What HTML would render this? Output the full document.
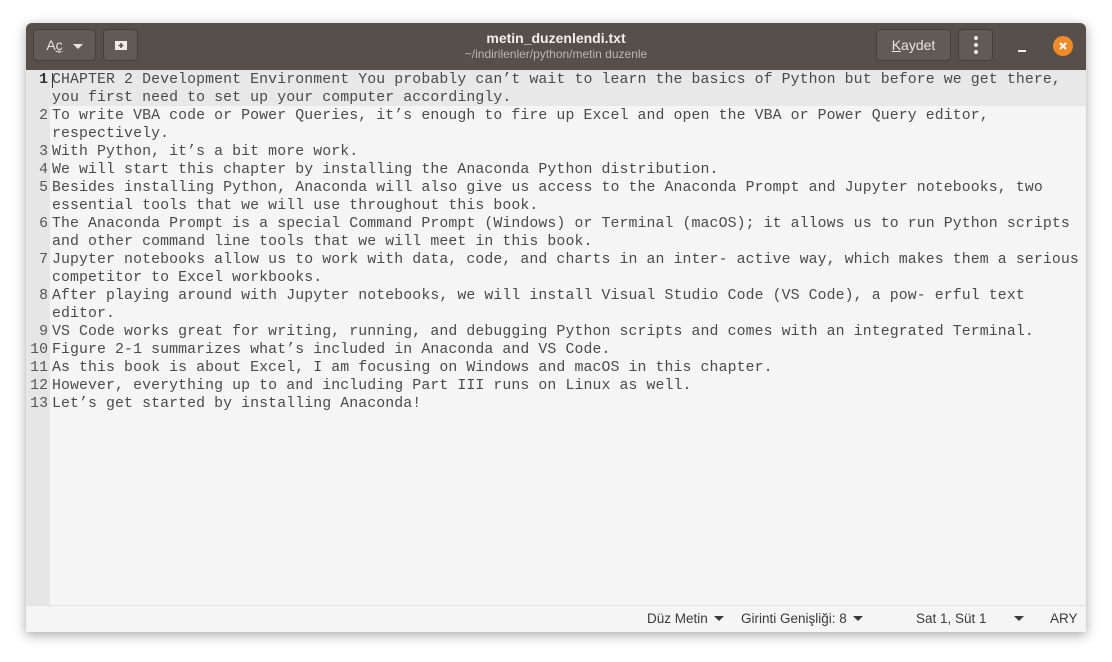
<!DOCTYPE html>
<html><head><meta charset="utf-8"><style>
body{margin:0;width:1112px;height:662px;background:#fff;position:relative;overflow:hidden;font-family:"Liberation Sans","DejaVu Sans",sans-serif}
.win{position:absolute;left:26px;top:23px;width:1060px;height:609px;box-shadow:0 3px 12px rgba(0,0,0,.35);border-radius:6px 6px 0 0;overflow:hidden;background:#f5f5f5}
.hdr{position:absolute;left:0;top:0;width:1060px;height:47px;background:#574f4a;}
.btn{position:absolute;top:6px;height:32px;border-radius:4px;background:#625a54;border:1px solid #463f3b;box-sizing:border-box;color:#e8e4e0;font-size:14px;line-height:30px;text-align:center}
.title{position:absolute;left:0;width:1060px;text-align:center;color:#f2efec}
.gut{position:absolute;left:0;top:47px;width:24px;height:535px;background:#e6e6e6}
.cur{position:absolute;left:24px;top:47px;width:1036px;height:36px;background:#e8e8e8}
.ed{position:absolute;left:0;top:48px;font-family:"Liberation Mono",monospace;font-size:14.85px;letter-spacing:0.1px;line-height:18px;color:#4a4a4a;white-space:pre}
.ln{position:absolute;left:0;width:22px;text-align:right;color:#555;letter-spacing:0}
.tx{position:absolute;left:26px}
.sb{position:absolute;left:0;top:582px;width:1060px;height:27px;background:#f5f5f5;border-top:1px solid #e0e0e0;font-size:13.5px;color:#3a3a3a}
.sb span{position:absolute;top:5px}
.tri{display:inline-block;width:0;height:0;border-left:5px solid transparent;border-right:5px solid transparent;border-top:5px solid #3a3a3a;vertical-align:middle;margin-left:6px}
</style></head><body>
<div class="win">
<div class="hdr">
 <div class="btn" style="left:7px;width:63px">A<span style="text-decoration:underline">ç</span><span class="tri" style="border-top-color:#e8e4e0;margin-left:10px"></span></div>
 <div class="btn" style="left:77px;width:35px"><svg width="16" height="14" viewBox="0 0 16 14" style="margin-top:8px"><path d="M2 3h12v9H2z" fill="#f0ece8"/><path d="M8 5v5M5.5 7.5h5" stroke="#574f4a" stroke-width="1.6"/></svg></div>
 <div class="title" style="top:7px;font-size:14px;font-weight:bold">metin_duzenlendi.txt</div>
 <div class="title" style="top:24px;font-size:12px;color:#bdb6b0">~/indirilenler/python/metin duzenle</div>
 <div class="btn" style="left:850px;width:75px"><span style="text-decoration:underline">K</span>aydet</div>
 <div class="btn" style="left:932px;width:35px"><svg width="6" height="20" style="margin-top:5px"><circle cx="3" cy="3" r="2" fill="#eee"/><circle cx="3" cy="10" r="2" fill="#eee"/><circle cx="3" cy="17" r="2" fill="#eee"/></svg></div>
 <div style="position:absolute;left:992px;top:27px;width:8px;height:2px;background:#eee"></div>
 <div style="position:absolute;left:1027px;top:13px;width:20px;height:20px;border-radius:50%;background:#f08b2a"><svg width="20" height="20"><path d="M7 7l6 6M13 7l-6 6" stroke="#fff" stroke-width="2"/></svg></div>
</div>
<div class="gut"></div>
<div class="cur"></div>
<div style="position:absolute;left:26px;top:50px;width:1px;height:15px;background:#333"></div>
<div class="ed">
<div class="ln" style="top:0;font-weight:bold;color:#333">1</div><div class="tx" style="top:0">CHAPTER 2 Development Environment You probably can’t wait to learn the basics of Python but before we get there,
you first need to set up your computer accordingly.</div>
<div class="ln" style="top:36px">2</div><div class="tx" style="top:36px">To write VBA code or Power Queries, it’s enough to fire up Excel and open the VBA or Power Query editor,
respectively.</div>
<div class="ln" style="top:72px">3</div><div class="tx" style="top:72px">With Python, it’s a bit more work.</div>
<div class="ln" style="top:90px">4</div><div class="tx" style="top:90px">We will start this chapter by installing the Anaconda Python distribution.</div>
<div class="ln" style="top:108px">5</div><div class="tx" style="top:108px">Besides installing Python, Anaconda will also give us access to the Anaconda Prompt and Jupyter notebooks, two
essential tools that we will use throughout this book.</div>
<div class="ln" style="top:144px">6</div><div class="tx" style="top:144px">The Anaconda Prompt is a special Command Prompt (Windows) or Terminal (macOS); it allows us to run Python scripts
and other command line tools that we will meet in this book.</div>
<div class="ln" style="top:180px">7</div><div class="tx" style="top:180px">Jupyter notebooks allow us to work with data, code, and charts in an inter- active way, which makes them a serious
competitor to Excel workbooks.</div>
<div class="ln" style="top:216px">8</div><div class="tx" style="top:216px">After playing around with Jupyter notebooks, we will install Visual Studio Code (VS Code), a pow- erful text
editor.</div>
<div class="ln" style="top:252px">9</div><div class="tx" style="top:252px">VS Code works great for writing, running, and debugging Python scripts and comes with an integrated Terminal.</div>
<div class="ln" style="top:270px">10</div><div class="tx" style="top:270px">Figure 2-1 summarizes what’s included in Anaconda and VS Code.</div>
<div class="ln" style="top:288px">11</div><div class="tx" style="top:288px">As this book is about Excel, I am focusing on Windows and macOS in this chapter.</div>
<div class="ln" style="top:306px">12</div><div class="tx" style="top:306px">However, everything up to and including Part III runs on Linux as well.</div>
<div class="ln" style="top:324px">13</div><div class="tx" style="top:324px">Let’s get started by installing Anaconda!</div>
</div>
<div class="sb">
 <span style="left:621px">Düz Metin<span class="tri"></span></span>
 <span style="left:715px">Girinti Genişliği: 8<span class="tri"></span></span>
 <span style="left:890px">Sat 1, Süt 1</span>
 <span style="left:982px"><span class="tri"></span></span>
 <span style="left:1024px">ARY</span>
</div>
</div>
</body></html>
